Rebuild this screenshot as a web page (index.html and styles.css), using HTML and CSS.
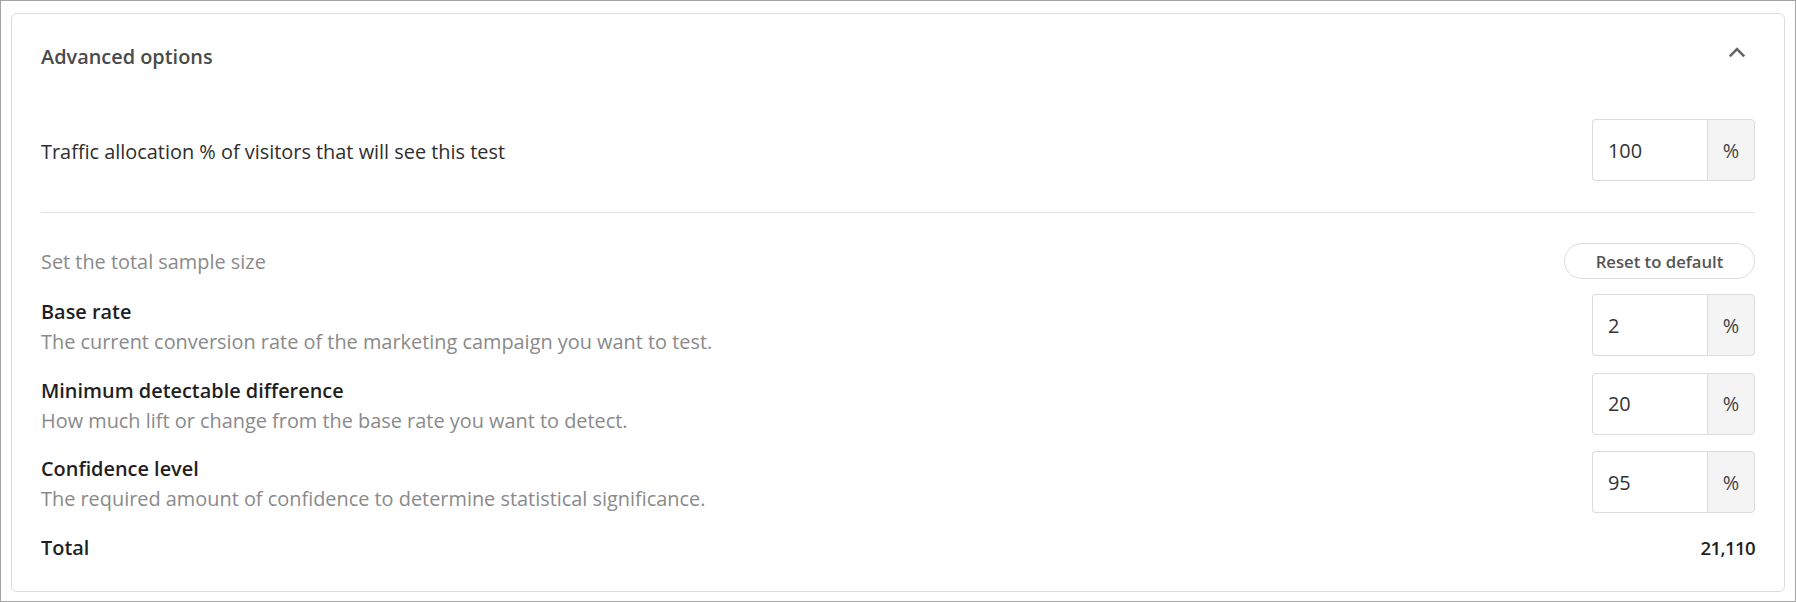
FILE: index.html
```html
<!DOCTYPE html>
<html lang="en">
<head>
    <meta charset="UTF-8">
    <meta name="viewport" content="width=device-width, initial-scale=1.0">
    <title>Advanced options</title>
    <link rel="stylesheet" href="styles.css">
</head>
<body>
    <div class="frame">
        <section class="panel">
            <!-- Collapsible header -->
            <header class="panel-header">
                <h2 class="panel-title">Advanced options</h2>
                <button class="collapse-btn" type="button" aria-label="Collapse">
                    <svg width="18" height="11" viewBox="0 0 18 11">
                        <polyline points="1.8,9.3 9,2.1 16.2,9.3" fill="none" stroke="#666" stroke-width="2.6"/>
                    </svg>
                </button>
            </header>

            <div class="panel-body">
                <div class="field-row traffic-row">
                    <div class="field-plain">Traffic allocation % of visitors that will see this test</div>
                    <div class="input-group">
                        <input class="input-value" type="text" value="100">
                        <span class="input-addon">%</span>
                    </div>
                </div>

                <hr class="divider">

                <div class="sample-header">
                    <span class="muted">Set the total sample size</span>
                    <button class="reset-btn" type="button">Reset to default</button>
                </div>

                <div class="field-row sample-row first">
                    <div class="field-text">
                        <div class="field-label">Base rate</div>
                        <div class="field-desc">The current conversion rate of the marketing campaign you want to test.</div>
                    </div>
                    <div class="input-group">
                        <input class="input-value" type="text" value="2">
                        <span class="input-addon">%</span>
                    </div>
                </div>

                <div class="field-row sample-row">
                    <div class="field-text">
                        <div class="field-label">Minimum detectable difference</div>
                        <div class="field-desc">How much lift or change from the base rate you want to detect.</div>
                    </div>
                    <div class="input-group">
                        <input class="input-value" type="text" value="20">
                        <span class="input-addon">%</span>
                    </div>
                </div>

                <div class="field-row sample-row">
                    <div class="field-text">
                        <div class="field-label">Confidence level</div>
                        <div class="field-desc">The required amount of confidence to determine statistical significance.</div>
                    </div>
                    <div class="input-group">
                        <input class="input-value" type="text" value="95">
                        <span class="input-addon">%</span>
                    </div>
                </div>

                <div class="total-row">
                    <span>Total</span>
                    <span class="total-value">21,110</span>
                </div>
            </div>
        </section>
    </div>
</body>
</html>
```

FILE: styles.css
```css
:root {
    --text-strong: #1f1f1f;
    --text-body: #2e2e2e;
    --text-title: #4a4a4a;
    --text-muted: #8a8a8a;
    --border-color: #dcdcdc;
    --addon-bg: #f4f4f4;
}

* {
    box-sizing: border-box;
    margin: 0;
    padding: 0;
}

body {
    font-family: 'Open Sans', 'Noto Sans', sans-serif;
    font-size: 19.9px;
    color: var(--text-body);
    background: #ffffff;
}

.frame {
    height: 602px;
    border: 1px solid #a3a3a3;
    padding: 12px 10px 9px 10px;
}

.panel {
    height: 100%;
    border: 1px solid var(--border-color);
    border-radius: 6px;
    padding: 0 29px 28px 29px;
}

.panel-header {
    display: flex;
    align-items: center;
    justify-content: space-between;
    height: 82px;
}

.panel-title {
    font-size: 19.9px;
    font-weight: 600;
    color: var(--text-title);
    padding-top: 2px;
}

.collapse-btn {
    border: none;
    background: none;
    display: flex;
    margin-right: 9px;
    margin-bottom: 6px;
    cursor: pointer;
}

.panel-body {
    padding-top: 23px;
}

.field-row {
    display: flex;
    align-items: center;
    justify-content: space-between;
}

.field-plain {
    color: var(--text-body);
    padding-top: 3px;
}

.field-text {
    padding-top: 2px;
}

.field-label {
    line-height: 31px;
    font-weight: 600;
    color: var(--text-strong);
}

.field-desc {
    line-height: 29px;
    color: var(--text-muted);
}

.input-group {
    display: flex;
    height: 62px;
}

.input-value {
    width: 115px;
    height: 100%;
    border: 1px solid var(--border-color);
    border-right: none;
    border-radius: 4px 0 0 4px;
    padding: 0 15px;
    font-family: inherit;
    font-size: 19.9px;
    color: #333;
    outline: none;
}

.input-addon {
    width: 48px;
    display: flex;
    align-items: center;
    justify-content: center;
    background: var(--addon-bg);
    border: 1px solid var(--border-color);
    border-radius: 0 4px 4px 0;
    color: #444;
}

.divider {
    border: none;
    border-top: 1px solid #e2e2e2;
    margin: 31px 0 30px 0;
}

.sample-header {
    display: flex;
    align-items: center;
    justify-content: space-between;
    height: 36px;
}

.muted {
    color: var(--text-muted);
}

.reset-btn {
    width: 191px;
    height: 36px;
    border: 1px solid var(--border-color);
    border-radius: 18px;
    background: #ffffff;
    font-family: inherit;
    font-size: 16.7px;
    font-weight: 600;
    color: #555;
    cursor: pointer;
}

.sample-row {
    margin-top: 16.5px;
}

.sample-row.first {
    margin-top: 15px;
}

.total-row {
    display: flex;
    justify-content: space-between;
    align-items: baseline;
    margin-top: 19px;
    line-height: 32px;
    font-weight: 600;
    color: var(--text-strong);
}

.total-value {
    font-size: 18.6px;
    letter-spacing: -0.6px;
}
```
